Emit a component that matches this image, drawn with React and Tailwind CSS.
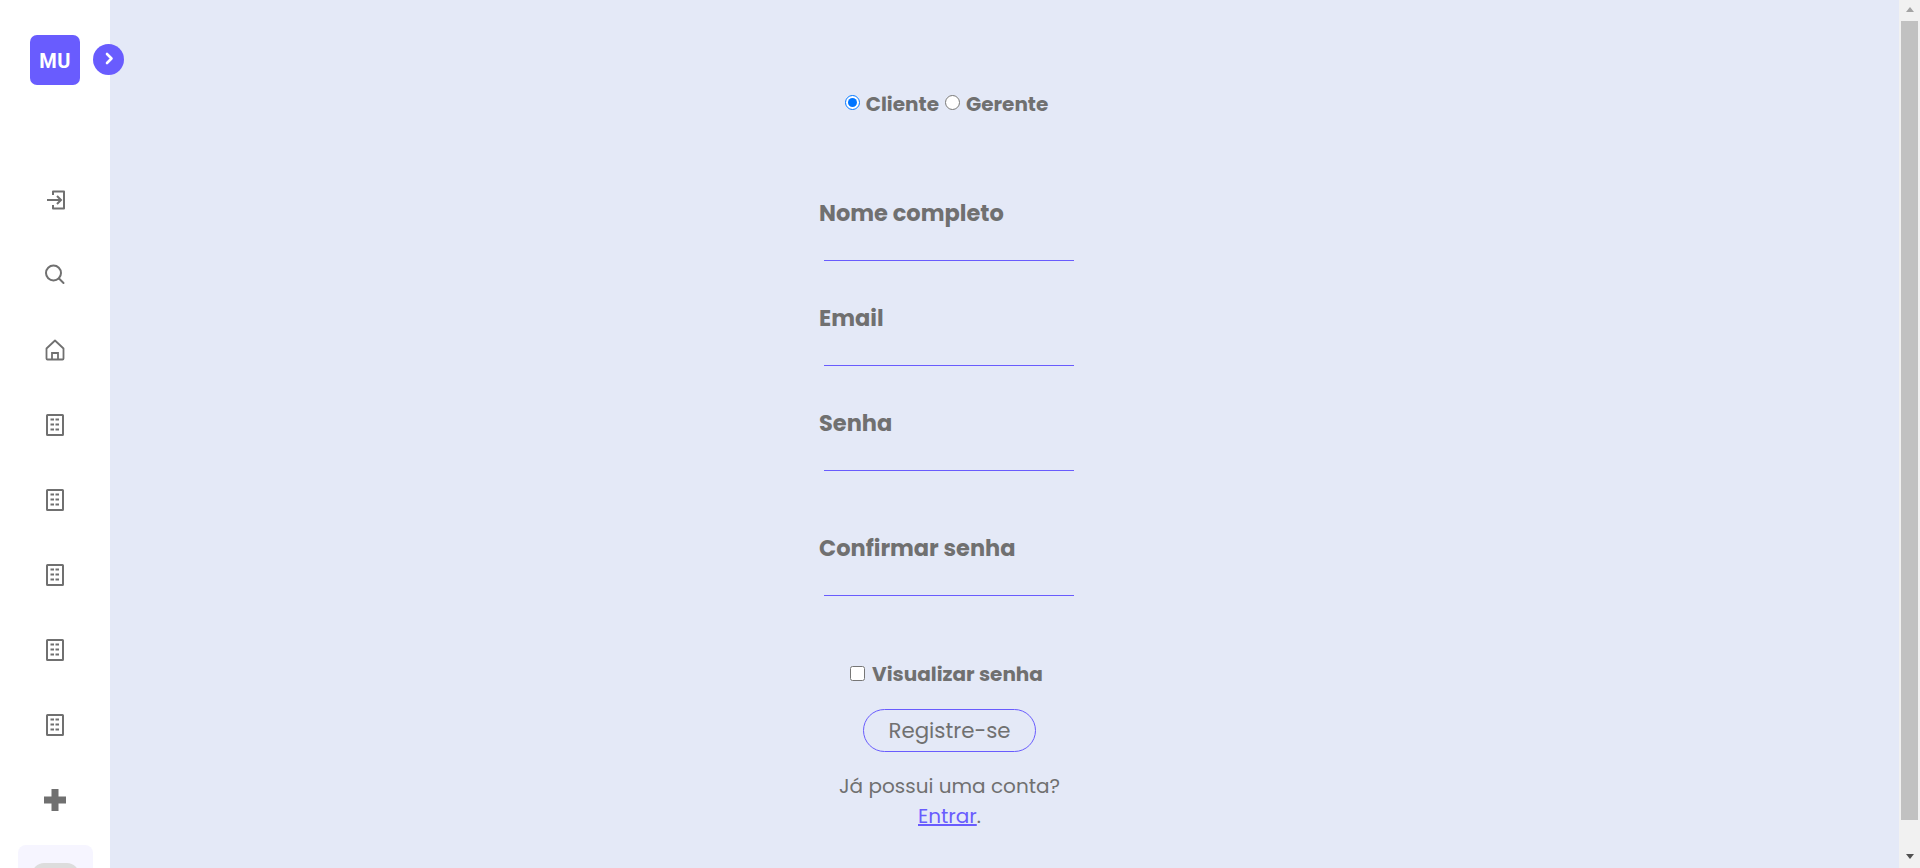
import React from 'react';

const LoginIcon = () => (
  <svg width="24" height="24" viewBox="0 0 24 24" fill="none" stroke="#707070" strokeWidth="2">
    <path d="M10 7V3.500h11v17H10V17" strokeLinejoin="round" />
    <path d="M4 12h14M14 8l4 4-4 4" />
  </svg>
);

const SearchIcon = () => (
  <svg width="24" height="24" viewBox="0 0 24 24" fill="none" stroke="#707070" strokeWidth="2">
    <circle cx="10.500" cy="10" r="7.500" />
    <path d="M16 15.500l4.500 4.500" strokeLinecap="round" />
  </svg>
);

const HomeIcon = () => (
  <svg width="24" height="24" viewBox="0 0 24 24" fill="none" stroke="#707070" strokeWidth="1.800">
    <path d="M3.500 10.500L12 2.500l8.500 8v10a1 1 0 0 1-1 1h-15a1 1 0 0 1-1-1z" strokeLinejoin="round" />
    <path d="M9 21.500v-6.500h6v6.500" />
  </svg>
);

const BuildingIcon = () => (
  <svg width="24" height="24" viewBox="0 0 24 24" fill="none">
    <rect x="4" y="2" width="16" height="20" rx="0.500" stroke="#707070" strokeWidth="2" />
    <path d="M7.500 6.500H11M12.500 6.500H16M7.500 11.500H11M12.500 11.500H16M7.500 16.500H11M12.500 16.500H16" stroke="#707070" strokeWidth="2" />
  </svg>
);

const PlusIcon = () => (
  <svg width="22" height="22" viewBox="0 0 22 22" fill="#707070">
    <path d="M7.500 0h7v7.500H22v7h-7.500V22h-7v-7.500H0v-7h7.500z" />
  </svg>
);

const Field = ({ label, type, className }) => (
  <div className={className}>
    <label className="block text-[22.5px] leading-[33px] font-bold text-[#707070]">{label}</label>
    <input type={type} className="block ml-[5px] mt-[4px] w-[250px] h-[27px] border-b border-[#695cfe] bg-transparent outline-none" />
  </div>
);

export default function App() {
  const icons = [LoginIcon, SearchIcon, HomeIcon, BuildingIcon, BuildingIcon, BuildingIcon, BuildingIcon, BuildingIcon, PlusIcon];

  return (
    <div className="flex h-[868px] overflow-hidden bg-[#e4e9f7] font-[Poppins,'Liberation_Sans',sans-serif]">
      <aside className="relative w-[110px] shrink-0 bg-white flex flex-col items-center">
        <div className="mt-[35px] w-[50px] h-[50px] shrink-0 rounded-[7px] bg-[#695cfe] flex items-center justify-center pt-[2px] text-white font-bold text-[20px] tracking-[0.5px] font-[Roboto,sans-serif]">MU</div>
        <div className="absolute left-[93px] top-[44px] w-[31px] h-[31px] rounded-full bg-[#695cfe] flex items-center justify-center">
          <svg width="16" height="16" viewBox="0 0 16 16" fill="none" stroke="#fff" strokeWidth="2.600" strokeLinecap="round" strokeLinejoin="round">
            <path d="M6 2l4.500 4.500L6 11" />
          </svg>
        </div>
        <div className="mt-[103px] flex flex-col items-center gap-[51px] shrink-0">
          {icons.map((Icon, i) => (
            <div key={i} className="h-[24px] flex items-center justify-center"><Icon /></div>
          ))}
        </div>
        <div className="mt-[33px] w-[75px] h-[60px] shrink-0 rounded-[8px] bg-[#f6f5ff] flex justify-center pt-[18px]">
          <div className="w-[47px] h-[24px] rounded-full bg-[#dddddd] pl-[6px] pt-[5px]">
            <div className="w-[18px] h-[18px] rounded-full bg-white" />
          </div>
        </div>
      </aside>

      <main className="flex-1 flex flex-col items-center pt-[90px] pr-[110px]">
        <div className="flex items-center mr-[6px] text-[20px] leading-[28px] font-bold text-[#707070]">
          <input type="radio" name="role" defaultChecked className="w-[15px] h-[15px] mr-[6px] mb-[4px]" />
          <span>Cliente</span>
          <input type="radio" name="role" className="w-[15px] h-[15px] mx-[6px] mb-[4px]" />
          <span>Gerente</span>
        </div>
        <div className="mt-[79px] w-[260px] mr-[1px]">
          <Field label="Nome completo" type="text" />
          <Field label="Email" type="email" className="mt-[41px]" />
          <Field label="Senha" type="password" className="mt-[41px]" />
          <Field label="Confirmar senha" type="password" className="mt-[61px]" />
        </div>
        <label className="mt-[64px] mr-[6px] flex items-center text-[20px] leading-[28px] font-bold text-[#707070]">
          <input type="checkbox" className="w-[15px] h-[15px] mr-[7px] mb-[2px]" />
          Visualizar senha
        </label>
        <button className="mt-[21px] w-[173px] h-[43px] rounded-full border border-[#695cfe] text-[#707070] text-[21.33px]">Registre-se</button>
        <p className="mt-[19px] text-center text-[20px] leading-[30px] text-[#707070]">
          Já possui uma conta?<br />
          <a href="#" className="text-[#695cfe] underline">Entrar</a>.
        </p>
      </main>

      <div className="w-[21px] shrink-0 bg-[#f1f1f1] flex flex-col items-center">
        <div className="h-[21px] shrink-0 flex items-center justify-center pb-[3px]">
          <div className="w-0 h-0 border-x-[4.500px] border-x-transparent border-b-[5px] border-b-[#a3a3a3]" />
        </div>
        <div className="w-[17px] h-[799px] shrink-0 bg-[#c1c1c1]" />
        <div className="flex-1 flex items-end justify-center pb-[9px]">
          <div className="w-0 h-0 border-x-[4.500px] border-x-transparent border-t-[5px] border-t-[#505050]" />
        </div>
      </div>
    </div>
  );
}
